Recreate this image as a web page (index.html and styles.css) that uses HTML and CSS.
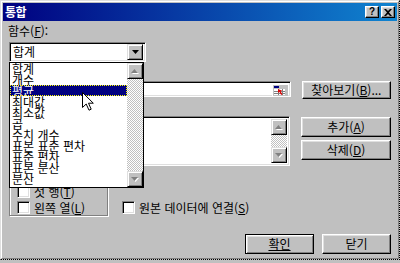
FILE: index.html
```html
<!DOCTYPE html>
<html lang="ko">
<head>
<meta charset="utf-8">
<title>통합</title>
<link rel="stylesheet" href="styles.css">
</head>
<body>
<div class="window">
  <div class="frame">
    <div class="titlebar">
      <span class="title">통합</span>
      <div class="caption-btns">
        <span class="cbtn help">?</span>
        <span class="cbtn close"><svg width="8" height="7" viewBox="0 0 8 7"><path d="M0 0h2l2 2 2-2h2L5 3.5 8 7H6L4 5 2 7H0l3-3.5z" fill="#000"/></svg></span>
      </div>
    </div>
    <div class="content">
      <div class="label first">함수(<u>F</u>):</div>
      <div class="combo-wrap">
        <div class="combo">
          <span class="combo-text">합계</span>
          <span class="arrow-btn"><svg width="7" height="4" viewBox="0 0 7 4"><path d="M0 0h7L3.5 4z" fill="#000"/></svg></span>
        </div>
        <div class="dropdown">
          <ul class="items">
            <li>합계</li>
            <li>개수</li>
            <li class="sel">평균</li>
            <li>최대값</li>
            <li>최소값</li>
            <li>곱</li>
            <li>수치 개수</li>
            <li>표본 표준 편차</li>
            <li>표준 편차</li>
            <li>표본 분산</li>
            <li>분산</li>
          </ul>
          <div class="vscroll">
            <span class="sbtn"><svg width="8" height="5" viewBox="0 0 8 5"><path d="M4.5 1L8 5H1z" fill="#fff"/><path d="M3.5 0L7 4H0z" fill="#808080"/></svg></span>
            <span class="track"></span>
            <span class="sbtn"><svg width="8" height="5" viewBox="0 0 8 5"><path d="M1 1h7L4.5 5z" fill="#fff"/><path d="M0 0h7L3.5 4z" fill="#808080"/></svg></span>
          </div>
        </div>
        <svg class="cursor" width="12" height="19" viewBox="0 0 12 19"><path d="M0.5 0.5V15.5L4.2 12L7 18.2L9.2 17.2L6.5 11.2H11.3Z" fill="#fff" stroke="#000" stroke-width="1"/></svg>
      </div>
      <div class="label">참조(<u>R</u>):</div>
      <div class="row">
        <div class="field">
          <span class="collapse"><svg width="12" height="10" viewBox="0 0 12 10"><rect x="0" y="0" width="5" height="2" fill="#000080"/><rect x="0" y="3" width="11" height="6" fill="#fff"/><path d="M0 5.5h11M0 7.5h11M4.5 3v6M8.5 3v6" stroke="#808080" stroke-width="1"/><path d="M4 3L4 7L5.3 5.8L7.2 9L8.4 8.3L6.6 5.2L8.3 4.8Z" fill="#e00000"/></svg></span>
        </div>
        <div class="btn">찾아보기(<u>B</u>)...</div>
      </div>
      <div class="label">모든 참조 영역(<u>E</u>):</div>
      <div class="row row-list">
        <div class="listbox">
          <div class="vscroll small">
            <span class="sbtn"><svg width="8" height="5" viewBox="0 0 8 5"><path d="M4.5 1L8 5H1z" fill="#fff"/><path d="M3.5 0L7 4H0z" fill="#808080"/></svg></span>
            <span class="track"></span>
            <span class="sbtn"><svg width="8" height="5" viewBox="0 0 8 5"><path d="M1 1h7L4.5 5z" fill="#fff"/><path d="M0 0h7L3.5 4z" fill="#808080"/></svg></span>
          </div>
        </div>
        <div class="btn-col">
          <div class="btn">추가(<u>A</u>)</div>
          <div class="btn">삭제(<u>D</u>)</div>
        </div>
      </div>
      <div class="row row-opts">
        <div class="group">
          <span class="legend">사용할 레이블</span>
          <div class="chk"><span class="box"></span><span>첫 행(<u>T</u>)</span></div>
          <div class="chk last"><span class="box"></span><span>왼쪽 열(<u>L</u>)</span></div>
        </div>
        <div class="chk link"><span class="box"></span><span>원본 데이터에 연결(<u>S</u>)</span></div>
      </div>
      <div class="footer">
        <div class="btn default"><u>확인</u></div>
        <div class="btn">닫기</div>
      </div>
    </div>
  </div>
</div>
</body>
</html>
```
FILE: styles.css
```css
* { box-sizing: border-box; }
body {
  margin: 0;
  background: #c0c0c0;
  font-family: "Noto Sans CJK KR", "Noto Sans", sans-serif;
  font-size: 12px;
  color: #000;
}
u { text-decoration-thickness: 1px; text-underline-offset: 1px; }
.window {
  width: 400px;
  height: 260px;
  border-top: 1px solid #dfdfdf;
  border-left: 1px solid #dfdfdf;
  border-right: 1px dotted #000;
  border-bottom: 1px dotted #000;
  background: #c0c0c0;
}
.frame {
  height: 100%;
  border-top: 1px solid #fff;
  border-left: 1px solid #fff;
  border-right: 1px solid #808080;
  border-bottom: 1px solid #808080;
  padding: 1px;
}
.titlebar {
  height: 18px;
  background: linear-gradient(to right, #000080, #1084d0);
  display: flex;
  align-items: center;
  justify-content: space-between;
  padding: 0 2px 0 2px;
}
.title {
  color: #fff;
  font-weight: bold;
  font-size: 12px;
  line-height: 12px;
  letter-spacing: -0.5px;
}
.caption-btns { display: flex; gap: 2px; }
.cbtn {
  width: 14px;
  height: 12px;
  background: #c0c0c0;
  border: 1px solid;
  border-color: #fff #000 #000 #fff;
  box-shadow: inset -1px -1px #808080, inset 1px 1px #dfdfdf;
  display: flex;
  align-items: center;
  justify-content: center;
  font-family: "Liberation Sans", sans-serif;
  font-weight: bold;
  font-size: 10px;
  line-height: 10px;
}
.content { padding: 0 6px; }
.label { height: 12px; line-height: 12px; margin-top: 4px; }
.label.first { margin-left: -1px; }
.combo-wrap { position: relative; margin-top: 5px; width: 137px; }
.combo {
  height: 20px;
  background: #fff;
  border: 1px solid;
  border-color: #808080 #fff #fff #808080;
  box-shadow: inset 1px 1px #000, inset -1px -1px #dfdfdf;
  display: flex;
  align-items: center;
  justify-content: space-between;
  padding: 2px 2px 2px 3px;
}
.combo-text { line-height: 12px; }
.arrow-btn, .sbtn {
  width: 16px;
  height: 16px;
  flex: none;
  background: #c0c0c0;
  border: 1px solid;
  border-color: #dfdfdf #000 #000 #dfdfdf;
  box-shadow: inset 1px 1px #fff, inset -1px -1px #808080;
  display: flex;
  align-items: center;
  justify-content: center;
}
.dropdown {
  position: absolute;
  left: 0;
  top: 20px;
  width: 135px;
  height: 126px;
  background: #fff;
  border: 1px solid #000;
  display: flex;
  z-index: 2;
}
.items {
  list-style: none;
  margin: 0;
  padding: 0;
  flex: 1;
  overflow: hidden;
}
.items li {
  height: 11px;
  line-height: 11px;
  padding-left: 2px;
  white-space: nowrap;
}
.items li.sel {
  background: #000080;
  color: #fff;
  outline: 1px dotted #ffff00;
  outline-offset: -1px;
}
.vscroll {
  width: 16px;
  display: flex;
  flex-direction: column;
}
.track {
  flex: 1;
  background: repeating-conic-gradient(#fff 0 25%, #c0c0c0 0 50%) 0 0 / 2px 2px;
}
.cursor { position: absolute; left: 73px; top: 50px; z-index: 3; }
.row { display: flex; align-items: flex-start; gap: 11px; margin-top: 3px; }
.field, .listbox {
  width: 284px;
  background: #fff;
  border: 1px solid;
  border-color: #808080 #fff #fff #808080;
  box-shadow: inset 1px 1px #000, inset -1px -1px #dfdfdf;
  display: flex;
  justify-content: flex-end;
  padding: 1px 1px 1px 1px;
}
.field { height: 16px; padding: 2px 2px 1px 2px; }
.collapse {
  width: 16px;
  height: 12px;
  background: #c0c0c0;
  border-top: 1px solid #fff;
  border-left: 1px solid #fff;
  display: flex;
  align-items: center;
  justify-content: center;
}
.btn {
  width: 90px;
  height: 18px;
  background: #c0c0c0;
  border: 1px solid;
  border-color: #fff #000 #000 #fff;
  box-shadow: inset -1px -1px #808080, inset 1px 1px #dfdfdf;
  display: flex;
  align-items: center;
  justify-content: center;
  line-height: 12px;
  white-space: nowrap;
}
.row-list { margin-top: 1px; }
.listbox { height: 50px; padding: 2px; }
.btn-col { display: flex; flex-direction: column; gap: 3px; margin-top: 1px; }
.btn-col .btn { height: 20px; }
.row-opts { margin-top: 12px; gap: 14px; }
.group {
  position: relative;
  width: 99px;
  height: 38px;
  border: 1px solid #808080;
  box-shadow: inset 1px 1px #fff, 1px 1px #fff;
  padding: 6px 0 0 7px;
}
.legend {
  position: absolute;
  left: 6px;
  top: -7px;
  padding: 0 2px;
  background: #c0c0c0;
  line-height: 12px;
}
.chk { display: flex; align-items: center; gap: 4px; height: 16px; align-items: flex-start; line-height: 13px; }
.chk.last { height: 13px; }
.box {
  width: 13px;
  height: 13px;
  flex: none;
  background: #fff;
  border: 1px solid;
  border-color: #808080 #fff #fff #808080;
  box-shadow: inset 1px 1px #000, inset -1px -1px #dfdfdf;
}
.chk.link { margin-top: 23px; }
.footer {
  display: flex;
  justify-content: flex-end;
  gap: 8px;
  margin-top: 17px;
  padding-right: 0;
}
.footer .btn { width: 69px; height: 20px; }
.footer .btn.default {
  border: 1px solid #000;
  box-shadow: inset 1px 1px #fff, inset -1px -1px #808080, inset 2px 2px #dfdfdf;
}
```
